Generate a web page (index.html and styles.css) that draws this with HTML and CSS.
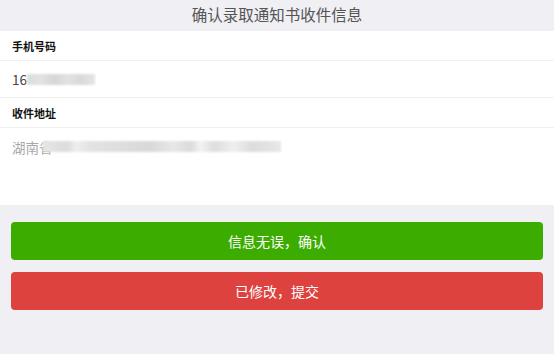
FILE: index.html
```html
<!DOCTYPE html>
<html lang="zh-CN">
<head>
<meta charset="utf-8">
<title>确认录取通知书收件信息</title>
<link rel="stylesheet" href="styles.css">
</head>
<body>
<header class="topbar">确认录取通知书收件信息</header>
<main class="form">
  <div class="label">手机号码</div>
  <div class="value phone">16<span class="mask mask-phone"></span></div>
  <div class="label">收件地址</div>
  <div class="value address">湖南省<span class="mask mask-addr"></span></div>
</main>
<div class="actions">
  <button class="btn btn-ok">信息无误，确认</button>
  <button class="btn btn-edit">已修改，提交</button>
</div>
</body>
</html>
```
FILE: styles.css
```css
html, body {
  margin: 0;
  padding: 0;
  background: #efeff4;
  font-family: "Noto Sans CJK SC", "Liberation Sans", sans-serif;
  height: 100%;
}
.topbar {
  height: 31px;
  line-height: 29px;
  text-align: center;
  font-size: 15.5px;
  color: #555;
  background: #efeff4;
}
.form {
  background: #fff;
  height: 174px;
  display: flex;
  flex-direction: column;
}
.label {
  height: 29px;
  line-height: 30px;
  padding-left: 12px;
  font-size: 11px;
  font-weight: bold;
  color: #111;
  border-bottom: 1px solid #f0f0f0;
}
.value {
  padding-left: 12px;
  font-size: 13.5px;
  display: flex;
  align-items: center;
}
.phone {
  height: 36px;
  color: #444;
  border-bottom: 1px solid #f0f0f0;
}
.address {
  color: #a8a8a8;
  align-items: flex-start;
  padding-top: 9px;
  line-height: 20px;
}
.mask {
  display: inline-block;
  height: 11px;
  background: linear-gradient(90deg, #ddd 0, #e4e2e4 20%, #d6d6d6 40%, #e2e2e2 60%, #d9d9d9 80%, #e6e6e6 100%);
  filter: blur(1.2px);
}
.mask-phone {
  width: 68px;
  margin-left: 0;
}
.mask-addr {
  width: 238px;
  margin-left: -10px;
  margin-top: 4px;
  background: linear-gradient(90deg, #e6e6e6 0, #dcdcdc 10%, #eee 14%, #e3e3e3 20%, #d8d8d8 45%, #e8e8e8 55%, #dadada 62%, #f3f3f3 66%, #ddd 72%, #efefef 80%, #dcdcdc 88%, #e8e8e8 100%);
}
.actions {
  padding: 17px 11px 0;
  display: flex;
  flex-direction: column;
  gap: 12px;
}
.btn {
  height: 38px;
  border: none;
  border-radius: 4px;
  color: #fff;
  font-size: 14px;
  font-family: "Noto Sans CJK SC", "Liberation Sans", sans-serif;
  padding: 0;
}
.btn-ok {
  background: #3cad00;
}
.btn-edit {
  background: #dd423f;
}
```
